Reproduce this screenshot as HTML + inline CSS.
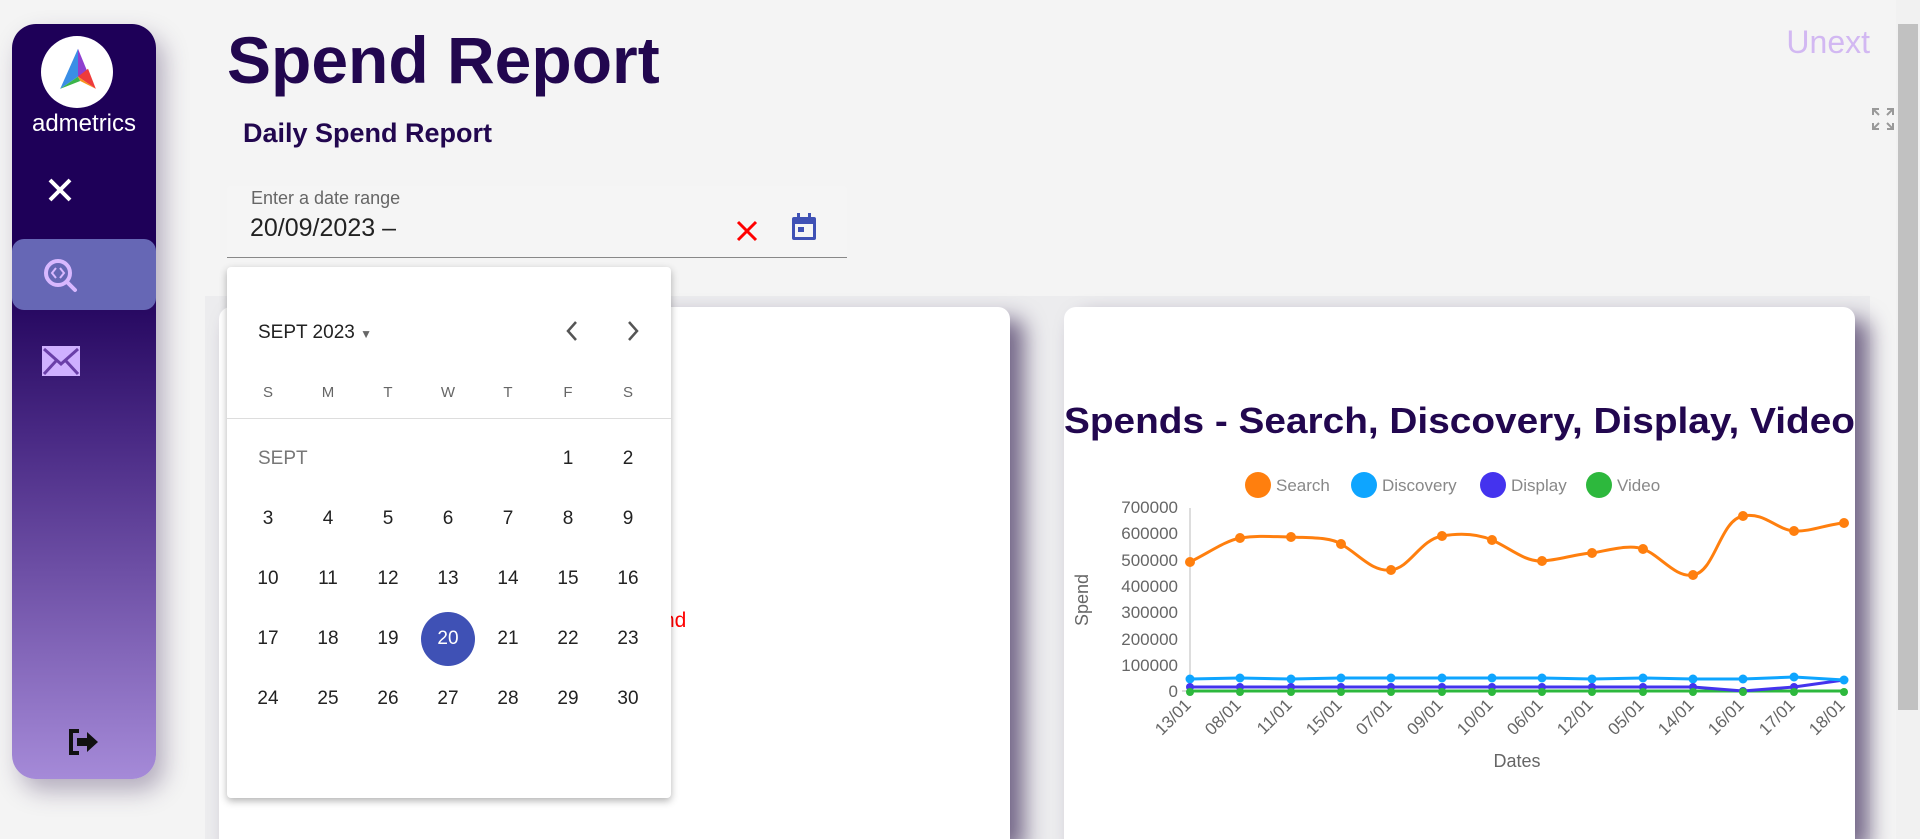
<!DOCTYPE html>
<html style="width:1920px;height:839px;overflow:hidden"><head><meta charset="utf-8"><style>
*{margin:0;padding:0;box-sizing:border-box}
body{width:1920px;height:839px;overflow:hidden;background:#f4f4f4;font-family:"Liberation Sans",sans-serif;position:relative}
.a{position:absolute}
.side{left:12px;top:24px;width:144px;height:755px;border-radius:24px;background:linear-gradient(180deg,#1e0058 0%,#1e0058 33%,#4a2a85 55%,#a58ad8 100%);box-shadow:8px 12px 24px rgba(60,40,90,.35)}
.card{background:#fff;border-radius:12px;box-shadow:14px 12px 22px rgba(50,30,80,.65)}
.cal{left:227px;top:267px;width:444px;height:531px;background:#fff;border-radius:4px;box-shadow:0 3px 8px rgba(0,0,0,.3)}
.d{position:absolute;width:60px;text-align:center;font-size:19px;color:#222;transform:translate(-30px,-11px)}
.h{position:absolute;width:60px;text-align:center;font-size:15px;color:#666;transform:translate(-30px,-9px)}
</style></head><body>
<div class="a" style="left:205px;top:296px;width:1665px;height:543px;background:#ececee"></div>
<div class="a side">
 <div class="a" style="left:29px;top:12px;width:72px;height:72px;border-radius:50%;background:#fff"></div>
 <svg class="a" style="left:37px;top:18px" width="58" height="58" viewBox="0 0 52 52"><polygon points="26,6 10,42 26,31" fill="#3a8ee6"/><polygon points="26,6 26,31 35,28" fill="#8f3fcf"/><polygon points="10,42 26,31 28,35" fill="#3bb54a"/><polygon points="26,31 42,42 35,24" fill="#ee3b3b"/><polygon points="28,35 42,42 26,31" fill="#f7941d"/></svg>
 <div class="a" style="left:0;width:144px;top:86px;text-align:center;color:#fff;font-size:24px">admetrics</div>
 <svg class="a" style="left:34px;top:152px" width="28" height="28"><path d="M4 4L24 24M24 4L4 24" stroke="#fff" stroke-width="4"/></svg>
 <div class="a" style="left:0;top:215px;width:144px;height:71px;background:#6667b5;border-radius:12px"></div>
 <svg class="a" style="left:29px;top:232px" width="40" height="40" viewBox="0 0 40 40"><circle cx="17" cy="17" r="12" fill="none" stroke="#d8b8ff" stroke-width="4"/><path d="M26 26L34 34" stroke="#d8b8ff" stroke-width="4" stroke-linecap="round"/><path d="M15 12L11 17L15 22M19 12L23 17L19 22" fill="none" stroke="#d8b8ff" stroke-width="2"/></svg>
 <svg class="a" style="left:30px;top:322px" width="38" height="30"><rect x="0" y="0" width="38" height="30" fill="#cfb0ff"/><path d="M2 3L19 18L36 3M2 28L14 15M36 28L24 15" fill="none" stroke="#6a3fa8" stroke-width="3"/></svg>
 <svg class="a" style="left:55px;top:704px" width="34" height="28" viewBox="0 0 34 28"><path d="M12 3H4V25H12" fill="none" stroke="#111" stroke-width="4"/><path d="M10 10H20V4L31 14L20 24V18H10Z" fill="#111"/></svg>
</div>
<div class="a" style="left:227px;top:22px;font-size:66px;font-weight:bold;color:#22074f;letter-spacing:0px">Spend Report</div>
<div class="a" style="left:243px;top:118px;font-size:27px;font-weight:bold;color:#22074f">Daily Spend Report</div>
<div class="a" style="right:50px;top:24px;font-size:32px;color:#d2b8f2">Unext</div>
<svg class="a" style="left:1872px;top:108px" width="22" height="22"><path d="M1 7V1H7M15 1H21V7M21 15V21H15M7 21H1V15M1 1L7 7M21 1L15 7M21 21L15 15M1 21L7 15" fill="none" stroke="#999" stroke-width="2"/></svg>
<div class="a" style="left:1896px;top:0;width:24px;height:839px;background:#f1f1f1"></div>
<div class="a" style="left:1898px;top:24px;width:20px;height:686px;background:#c1c1c1"></div>
<div class="a card" style="left:219px;top:307px;width:791px;height:532px;border-radius:12px 12px 0 0"></div>
<div class="a card" style="left:1064px;top:307px;width:791px;height:532px;border-radius:12px 12px 0 0"></div>
<div class="a" style="left:663px;top:609px;color:#f00;font-size:21px">nd</div>
<div class="a" style="left:227px;top:186px;width:620px;height:72px;background:#f5f5f5;border-bottom:1px solid #888;border-radius:4px 4px 0 0"></div>
<div class="a" style="left:251px;top:188px;font-size:18px;color:#666">Enter a date range</div>
<div class="a" style="left:250px;top:214px;font-size:25px;color:#222">20/09/2023 –</div>
<svg class="a" style="left:735px;top:219px" width="24" height="24"><path d="M3 3L21 21M21 3L3 21" stroke="#f00" stroke-width="3"/></svg>
<svg class="a" style="left:790px;top:212px" width="28" height="30" viewBox="0 0 28 30"><rect x="2" y="5" width="24" height="23" rx="2" fill="#3f51b5"/><rect x="5" y="12" width="18" height="13" fill="#f5f5f5"/><rect x="7" y="1" width="3" height="6" fill="#3f51b5"/><rect x="18" y="1" width="3" height="6" fill="#3f51b5"/><rect x="8" y="15" width="6" height="5" fill="#3f51b5"/></svg>
<div class="a cal">
 <div class="a" style="left:31px;top:55px;font-size:19px;color:#222">SEPT 2023 <span style="font-size:12px;color:#666">▼</span></div>
 <svg class="a" style="left:335px;top:52px" width="20" height="24"><path d="M14 3L6 12L14 21" fill="none" stroke="#555" stroke-width="2.5"/></svg>
 <svg class="a" style="left:396px;top:52px" width="20" height="24"><path d="M6 3L14 12L6 21" fill="none" stroke="#555" stroke-width="2.5"/></svg>
 <div class="a" style="left:0;top:151px;width:444px;height:1px;background:#ddd"></div>
 <div class="h" style="left:41px;top:126px">S</div><div class="h" style="left:101px;top:126px">M</div><div class="h" style="left:161px;top:126px">T</div><div class="h" style="left:221px;top:126px">W</div><div class="h" style="left:281px;top:126px">T</div><div class="h" style="left:341px;top:126px">F</div><div class="h" style="left:401px;top:126px">S</div>
 <div class="a" style="left:31px;top:181px;font-size:19px;color:#777">SEPT</div>
 <div class="d" style="left:341px;top:192px">1</div><div class="d" style="left:401px;top:192px">2</div>
 <div class="d" style="left:41px;top:252px">3</div><div class="d" style="left:101px;top:252px">4</div><div class="d" style="left:161px;top:252px">5</div><div class="d" style="left:221px;top:252px">6</div><div class="d" style="left:281px;top:252px">7</div><div class="d" style="left:341px;top:252px">8</div><div class="d" style="left:401px;top:252px">9</div>
 <div class="d" style="left:41px;top:312px">10</div><div class="d" style="left:101px;top:312px">11</div><div class="d" style="left:161px;top:312px">12</div><div class="d" style="left:221px;top:312px">13</div><div class="d" style="left:281px;top:312px">14</div><div class="d" style="left:341px;top:312px">15</div><div class="d" style="left:401px;top:312px">16</div>
 <div class="a" style="left:194px;top:345px;width:54px;height:54px;border-radius:50%;background:#3f51b5"></div>
 <div class="d" style="left:41px;top:372px">17</div><div class="d" style="left:101px;top:372px">18</div><div class="d" style="left:161px;top:372px">19</div><div class="d" style="left:221px;top:372px;color:#fff">20</div><div class="d" style="left:281px;top:372px">21</div><div class="d" style="left:341px;top:372px">22</div><div class="d" style="left:401px;top:372px">23</div>
 <div class="d" style="left:41px;top:432px">24</div><div class="d" style="left:101px;top:432px">25</div><div class="d" style="left:161px;top:432px">26</div><div class="d" style="left:221px;top:432px">27</div><div class="d" style="left:281px;top:432px">28</div><div class="d" style="left:341px;top:432px">29</div><div class="d" style="left:401px;top:432px">30</div>
</div>
<svg class="a" style="left:0;top:0" width="1920" height="839" font-family="Liberation Sans, sans-serif">
 <text x="1064" y="433" font-size="36" font-weight="bold" fill="#22074f" textLength="791" lengthAdjust="spacingAndGlyphs">Spends - Search, Discovery, Display, Video</text>
 <g font-size="17" fill="#888">
  <circle cx="1258" cy="485" r="13" fill="#ff7f0e"/><text x="1276" y="491">Search</text>
  <circle cx="1364" cy="485" r="13" fill="#0ea5ff"/><text x="1382" y="491">Discovery</text>
  <circle cx="1493" cy="485" r="13" fill="#4433ee"/><text x="1511" y="491">Display</text>
  <circle cx="1599" cy="485" r="13" fill="#2db83d"/><text x="1617" y="491">Video</text>
 </g>
 <g font-size="17" fill="#666" text-anchor="end">
  <text x="1178" y="513">700000</text><text x="1178" y="539">600000</text><text x="1178" y="566">500000</text><text x="1178" y="592">400000</text><text x="1178" y="618">300000</text><text x="1178" y="645">200000</text><text x="1178" y="671">100000</text><text x="1178" y="697">0</text>
 </g>
 <line x1="1190" y1="508" x2="1190" y2="692" stroke="#bbb"/>
 <line x1="1182" y1="691" x2="1190" y2="691" stroke="#bbb"/>
 <text transform="translate(1088,600) rotate(-90)" font-size="18" fill="#666" text-anchor="middle">Spend</text>
 <text x="1517" y="767" font-size="18" fill="#666" text-anchor="middle">Dates</text>
 <g font-size="17" fill="#666" text-anchor="end">
  <text transform="translate(1192,706) rotate(-45)">13/01</text><text transform="translate(1242,706) rotate(-45)">08/01</text><text transform="translate(1293,706) rotate(-45)">11/01</text><text transform="translate(1343,706) rotate(-45)">15/01</text><text transform="translate(1393,706) rotate(-45)">07/01</text><text transform="translate(1444,706) rotate(-45)">09/01</text><text transform="translate(1494,706) rotate(-45)">10/01</text><text transform="translate(1544,706) rotate(-45)">06/01</text><text transform="translate(1594,706) rotate(-45)">12/01</text><text transform="translate(1645,706) rotate(-45)">05/01</text><text transform="translate(1695,706) rotate(-45)">14/01</text><text transform="translate(1745,706) rotate(-45)">16/01</text><text transform="translate(1796,706) rotate(-45)">17/01</text><text transform="translate(1846,706) rotate(-45)">18/01</text>
 </g>
 <g fill="none" stroke-width="3" stroke-linejoin="round">
  <polyline stroke="#2db83d" points="1190,691 1844,691"/>
  <polyline stroke="#4433ee" points="1190,687 1240,687 1291,687 1341,687 1391,687 1442,687 1492,687 1542,687 1592,687 1643,687 1693,687 1743,691 1794,687 1844,680"/>
  <polyline stroke="#0ea5ff" points="1190,679 1240,678 1291,679 1341,678 1391,678 1442,678 1492,678 1542,678 1592,679 1643,678 1693,679 1743,679 1794,677 1844,680"/>
  <path stroke="#ff7f0e" d="M1190,562 C1210,552 1225,541 1240,538 C1260,535 1275,537 1291,537 C1310,538 1330,537 1341,544 C1360,555 1372,572 1391,570 C1410,568 1420,540 1442,536 C1460,533 1478,534 1492,540 C1510,548 1525,562 1542,561 C1560,560 1575,554 1592,553 C1610,550 1630,544 1643,549 C1660,555 1675,578 1693,575 C1715,572 1720,520 1743,516 C1765,512 1775,529 1794,531 C1810,532 1828,524 1844,523"/>
 </g>
 <g fill="#ff7f0e"><circle cx="1190" cy="562" r="5"/><circle cx="1240" cy="538" r="5"/><circle cx="1291" cy="537" r="5"/><circle cx="1341" cy="544" r="5"/><circle cx="1391" cy="570" r="5"/><circle cx="1442" cy="536" r="5"/><circle cx="1492" cy="540" r="5"/><circle cx="1542" cy="561" r="5"/><circle cx="1592" cy="553" r="5"/><circle cx="1643" cy="549" r="5"/><circle cx="1693" cy="575" r="5"/><circle cx="1743" cy="516" r="5"/><circle cx="1794" cy="531" r="5"/><circle cx="1844" cy="523" r="5"/></g>
 <g fill="#0ea5ff"><circle cx="1190" cy="679" r="4.5"/><circle cx="1240" cy="678" r="4.5"/><circle cx="1291" cy="679" r="4.5"/><circle cx="1341" cy="678" r="4.5"/><circle cx="1391" cy="678" r="4.5"/><circle cx="1442" cy="678" r="4.5"/><circle cx="1492" cy="678" r="4.5"/><circle cx="1542" cy="678" r="4.5"/><circle cx="1592" cy="679" r="4.5"/><circle cx="1643" cy="678" r="4.5"/><circle cx="1693" cy="679" r="4.5"/><circle cx="1743" cy="679" r="4.5"/><circle cx="1794" cy="677" r="4.5"/><circle cx="1844" cy="680" r="4.5"/></g>
 <g fill="#4433ee"><circle cx="1190" cy="687" r="4"/><circle cx="1240" cy="687" r="4"/><circle cx="1291" cy="687" r="4"/><circle cx="1341" cy="687" r="4"/><circle cx="1391" cy="687" r="4"/><circle cx="1442" cy="687" r="4"/><circle cx="1492" cy="687" r="4"/><circle cx="1542" cy="687" r="4"/><circle cx="1592" cy="687" r="4"/><circle cx="1643" cy="687" r="4"/><circle cx="1693" cy="687" r="4"/><circle cx="1743" cy="691" r="4"/><circle cx="1794" cy="687" r="4"/></g>
 <g fill="#2db83d"><circle cx="1190" cy="692" r="4"/><circle cx="1240" cy="692" r="4"/><circle cx="1291" cy="692" r="4"/><circle cx="1341" cy="692" r="4"/><circle cx="1391" cy="692" r="4"/><circle cx="1442" cy="692" r="4"/><circle cx="1492" cy="692" r="4"/><circle cx="1542" cy="692" r="4"/><circle cx="1592" cy="692" r="4"/><circle cx="1643" cy="692" r="4"/><circle cx="1693" cy="692" r="4"/><circle cx="1743" cy="692" r="4"/><circle cx="1794" cy="692" r="4"/><circle cx="1844" cy="692" r="4"/></g>
</svg>
</body></html>
